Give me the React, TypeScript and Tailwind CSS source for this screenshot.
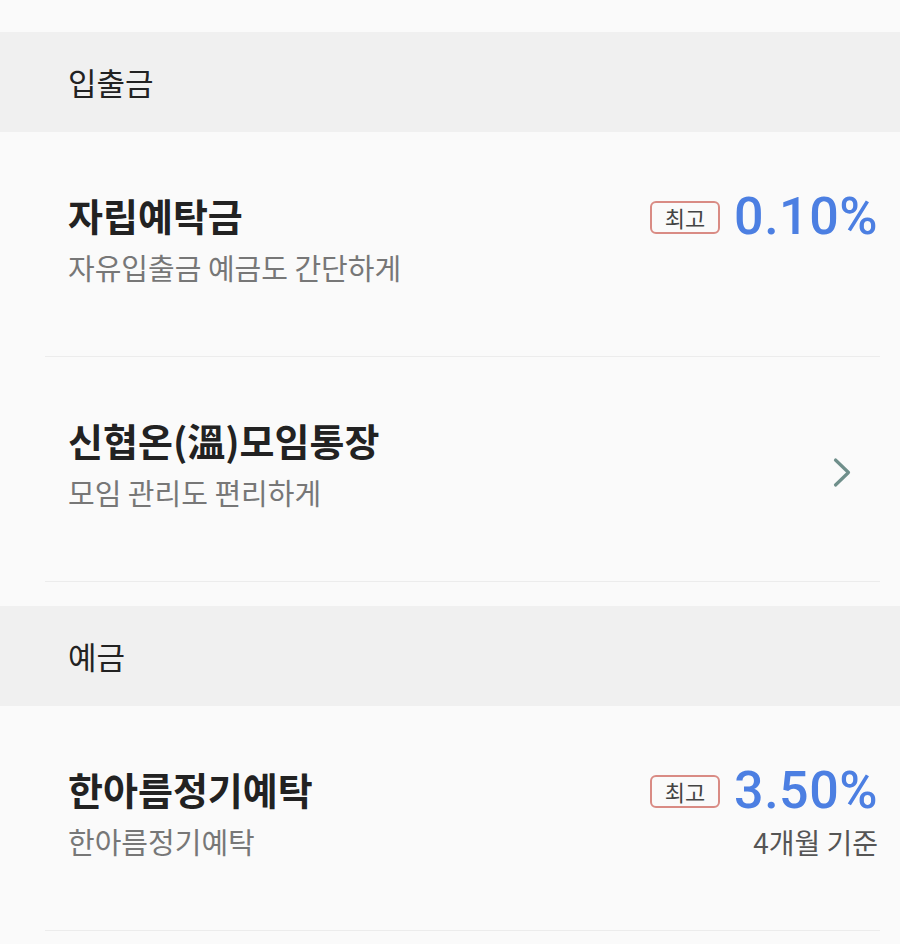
import React from 'react';

type Product = {
  name: string;
  desc: string;
  rate?: string;
  note?: string;
  link?: boolean;
};

const sections: { title: string; gap: string; items: Product[] }[] = [
  {
    title: '입출금',
    gap: 'mt-[32px]',
    items: [
      { name: '자립예탁금', desc: '자유입출금 예금도 간단하게', rate: '0.10%' },
      { name: '신협온(溫)모임통장', desc: '모임 관리도 편리하게', link: true },
    ],
  },
  {
    title: '예금',
    gap: 'mt-[24px]',
    items: [
      { name: '한아름정기예탁', desc: '한아름정기예탁', rate: '3.50%', note: '4개월 기준' },
    ],
  },
];

const Chevron = () => (
  <svg width="20" height="32" viewBox="0 0 20 32" fill="none" className="mr-[26px]">
    <path d="M3.5 3 L16.5 15.5 L3.5 28" stroke="#6f8f8b" strokeWidth="3.2" strokeLinecap="round" strokeLinejoin="round" />
  </svg>
);

const ProductRow = ({ item }: { item: Product }) => (
  <div className="ml-[45px] mr-[20px] h-[225px] border-b border-[#ececec] flex items-center pl-[23px] pr-[2px] pb-[12px]">
    <div className="flex-1 flex justify-between items-start">
      <div>
        <p className="text-[38px] leading-[48px] font-bold text-[#222]">{item.name}</p>
        <p className="mt-[10px] text-[29px] leading-[36px] text-[#777]">{item.desc}</p>
      </div>

      {item.link && (
        <div className="self-center pt-[20px]">
          <Chevron />
        </div>
      )}

      {item.rate && (
        <div className="flex flex-col items-end">
          <div className="flex items-center gap-[14px] h-[52px]">
            <span className="h-[33px] w-[70px] border-2 border-[#d98b84] rounded-[6px] flex items-center justify-center text-[22px] leading-none text-[#444]">
              최고
            </span>
            <span
              className="text-[52px] leading-none font-medium text-[#4c7fe2] tracking-[0.5px]"
              style={{ fontFamily: 'Roboto, "Noto Sans", sans-serif' }}
            >
              {item.rate}
            </span>
          </div>
          {item.note && (
            <p className="mt-[10px] text-[28px] leading-[30px] text-[#555]">{item.note}</p>
          )}
        </div>
      )}
    </div>
  </div>
);

export default function App() {
  return (
    <div
      className="w-[900px] h-[944px] bg-[#fafafa] overflow-hidden"
      style={{ fontFamily: '"Noto Sans CJK KR", "Noto Sans", sans-serif' }}
    >
      {sections.map((section) => (
        <div key={section.title}>
          <div className={`${section.gap} h-[100px] bg-[#f0f0f0] flex items-center pl-[68px]`}>
            <p className="text-[31px] text-[#222]">{section.title}</p>
          </div>
          {section.items.map((item) => (
            <ProductRow key={item.name} item={item} />
          ))}
        </div>
      ))}
    </div>
  );
}
